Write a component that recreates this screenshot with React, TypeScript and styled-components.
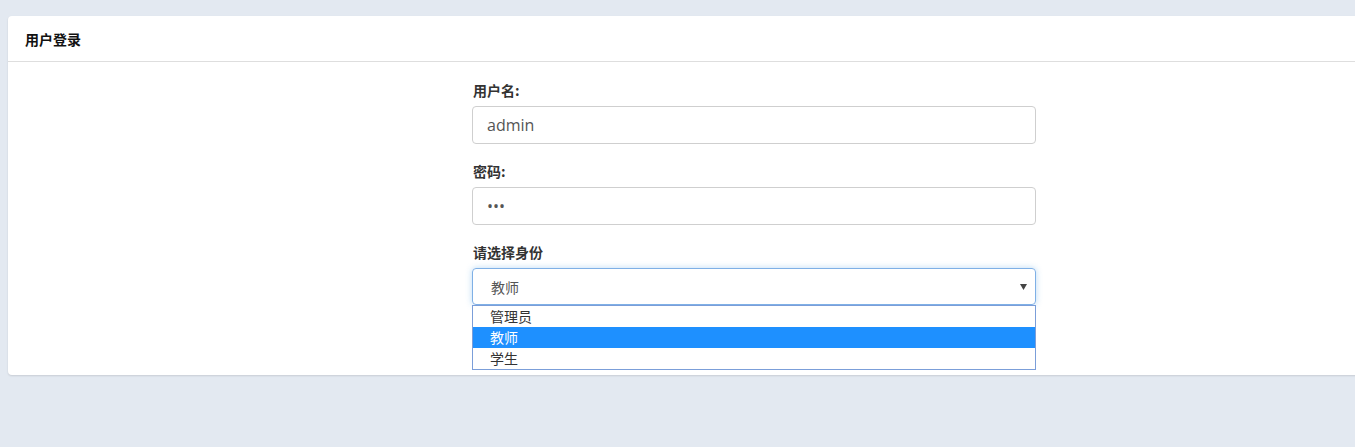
import React from 'react';
import styled, { createGlobalStyle } from 'styled-components';

const GlobalStyle = createGlobalStyle`
  html, body {
    margin: 0;
    padding: 0;
    background: #e3e9f1;
    overflow: hidden;
  }
  body {
    font-family: "Open Sans", "Noto Sans CJK SC", sans-serif;
    color: #333;
  }
`;

const Page = styled.div`
  padding: 16px 0 0 8px;
  min-height: 447px;
  box-sizing: border-box;
`;

const Card = styled.section`
  width: 1492px;
  background: #fff;
  border-radius: 4px;
  box-shadow: 0 1px 2px rgba(0, 0, 0, 0.12);
`;

const CardHeader = styled.header`
  display: flex;
  align-items: center;
  height: 45px;
  padding: 0 17px;
  border-bottom: 1px solid #dedede;
  font-family: "Noto Sans CJK SC", sans-serif;
  font-size: 14px;
  font-weight: 700;
  color: #111;
`;

const CardBody = styled.div`
  display: flex;
  justify-content: center;
  padding: 18px 0 70px;
`;

const Form = styled.form`
  width: 564px;
`;

const Group = styled.div<{ $last?: boolean }>`
  position: relative;
  margin-bottom: ${({ $last }) => ($last ? 0 : '17px')};
`;

const Label = styled.label`
  display: block;
  margin: 0 0 6px 1px;
  font-family: "Noto Sans CJK SC", sans-serif;
  font-size: 14px;
  font-weight: 700;
  line-height: 20px;
  color: #333;
`;

const Input = styled.input`
  display: block;
  box-sizing: border-box;
  width: 100%;
  height: 38px;
  padding: 0 14px;
  border: 1px solid #cfcfcf;
  border-radius: 4px;
  font-family: "Open Sans", "Noto Sans CJK SC", sans-serif;
  font-size: 16px;
  color: #555;
  background: #fff;
  outline: none;
`;

const SelectBox = styled.div`
  display: flex;
  align-items: center;
  justify-content: space-between;
  box-sizing: border-box;
  height: 37px;
  padding: 0 8px 0 18px;
  border: 1px solid #7fb0e6;
  border-radius: 4px;
  box-shadow: 0 0 6px rgba(102, 175, 233, 0.45);
  font-family: "Noto Sans CJK SC", sans-serif;
  font-size: 14px;
  color: #555;
`;

const Caret = styled.svg`
  width: 7px;
  height: 6px;
  fill: #444;
`;

const OptionList = styled.ul`
  position: absolute;
  top: 100%;
  left: 0;
  right: 0;
  margin: 0;
  padding: 0;
  list-style: none;
  border: 1px solid #7b9ed9;
  background: #fff;
  z-index: 5;
`;

const Option = styled.li<{ $active?: boolean }>`
  height: 21px;
  line-height: 21px;
  padding-left: 17px;
  font-family: "Noto Sans CJK SC", sans-serif;
  font-size: 14px;
  color: ${({ $active }) => ($active ? '#fff' : '#333')};
  background: ${({ $active }) => ($active ? '#1e90ff' : 'transparent')};
`;

const roles = ['管理员', '教师', '学生'];

export default function App() {
  const selected = '教师';
  return (
    <>
      <GlobalStyle />
      <Page>
        <Card>
          <CardHeader>用户登录</CardHeader>
          <CardBody>
            <Form onSubmit={(e) => e.preventDefault()}>
              <Group>
                <Label>用户名:</Label>
                <Input type="text" defaultValue="admin" />
              </Group>
              <Group>
                <Label>密码:</Label>
                <Input type="password" defaultValue="123" />
              </Group>
              <Group $last>
                <Label>请选择身份</Label>
                <SelectBox>
                  <span>{selected}</span>
                  <Caret viewBox="0 0 7 6">
                    <path d="M0 0h7L3.5 6z" />
                  </Caret>
                </SelectBox>
                <OptionList>
                  {roles.map((r) => (
                    <Option key={r} $active={r === selected}>
                      {r}
                    </Option>
                  ))}
                </OptionList>
              </Group>
            </Form>
          </CardBody>
        </Card>
      </Page>
    </>
  );
}
